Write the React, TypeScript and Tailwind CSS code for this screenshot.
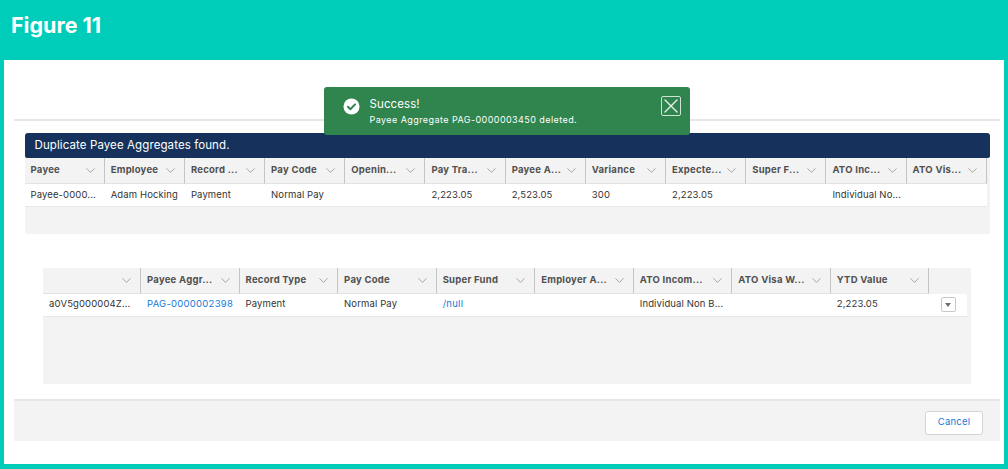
import { ChevronDown } from "lucide-react";

const topColumns = ["Payee", "Employee", "Record ...", "Pay Code", "Openin...", "Pay Tra...", "Payee A...", "Variance", "Expecte...", "Super F...", "ATO Inc...", "ATO Vis..."];
const topRow = ["Payee-0000...", "Adam Hocking", "Payment", "Normal Pay", "", "2,223.05", "2,523.05", "300", "2,223.05", "", "Individual No...", ""];

const bottomColumns = ["", "Payee Aggr...", "Record Type", "Pay Code", "Super Fund", "Employer A...", "ATO Incom...", "ATO Visa W...", "YTD Value"];
const bottomRow = ["a0V5g000004Z...", "PAG-0000002398", "Payment", "Normal Pay", "/null", "", "Individual Non B...", "", "2,223.05"];

function HeaderCell({ label }: { label: string }) {
  return (
    <div className="flex h-[26px] items-center justify-between border-b border-r border-b-[#e3e3e3] border-r-[#c4c4c4] pl-[6px] pr-[6px]">
      <span className="whitespace-nowrap text-[9.5px] font-bold tracking-[0.25px] text-[#505050]">{label}</span>
      <ChevronDown className="h-[15px] w-[15px] shrink-0 text-[#777777]" strokeWidth={1} />
    </div>
  );
}

function BodyCell({ value, link }: { value: string; link?: boolean }) {
  return (
    <div className={`flex h-[22px] items-center whitespace-nowrap pl-[6px] text-[9.5px] ${link ? "tracking-[0.26px] text-[#1679d8]" : "tracking-[0.12px] text-[#333333]"}`}>
      {value}
    </div>
  );
}

export default function App() {
  return (
    <div className="flex h-[469px] w-[1008px] flex-col overflow-hidden bg-[#00cdb9] font-['Inter',sans-serif]">
      <div className="flex h-[60px] shrink-0 items-start pl-[11px] pt-[12px]">
        <h1 className="text-[21.5px] font-bold leading-[27px] text-white">Figure 11</h1>
      </div>

      <div className="relative mx-[4px] flex h-[404px] flex-col bg-white">
        {/* toast sits over the rule and the banner */}
        <div className="absolute left-[319.5px] top-[27px] z-10 flex h-[48px] w-[366.5px] items-start rounded-[3px] bg-[#30844e] pl-[19px] pt-[10px] text-white">
          <svg viewBox="0 0 18 18" className="mt-[1px] h-[17px] w-[17px] shrink-0">
            <circle cx="9" cy="9" r="8.5" fill="#fff" />
            <path d="M5.2 9.3l2.6 2.6 5-5.2" fill="none" stroke="#30844e" strokeWidth="2" strokeLinecap="round" strokeLinejoin="round" />
          </svg>
          <div className="ml-[10px] flex flex-col">
            <span className="text-[11.5px] leading-[14px] tracking-[0.1px]">Success!</span>
            <span className="mt-[2px] whitespace-nowrap text-[9px] leading-[14px] tracking-[0.43px]">Payee Aggregate PAG-0000003450 deleted.</span>
          </div>
          <div className="ml-auto mr-[9px] mt-[-1px] flex h-[20px] w-[20px] items-center justify-center rounded-[2px] border border-[#cfe3d6]">
            <svg viewBox="0 0 14 14" className="h-[14px] w-[14px]">
              <path d="M1 1l12 12M13 1L1 13" stroke="#e6f1ea" strokeWidth="1.4" strokeLinecap="round" />
            </svg>
          </div>
        </div>

        <div className="ml-[10px] mr-[4px] mt-[59px] h-[2px] bg-[#e7e7e7]" />

        <div className="ml-[20.5px] mr-[14.5px] mt-[12px]">
          <div className="flex h-[25px] items-center rounded-[3px] rounded-b-[2px] bg-[#16325c] pl-[10px] text-[11.5px] tracking-[0.1px] text-white">
            Duplicate Payee Aggregates found.
          </div>
          <div className="bg-[#f3f3f3] pb-[27px]">
            <div className="grid grid-cols-[repeat(12,80.2px)]">
              {topColumns.map((c) => (
                <HeaderCell key={c} label={c} />
              ))}
              {topRow.map((v, i) => (
                <div key={i} className="border-b border-[#e8e8e8] bg-white">
                  <BodyCell value={v} />
                </div>
              ))}
            </div>
          </div>
        </div>

        <div className="ml-[39px] mr-[33px] mt-[33.5px] h-[116px] bg-[#f3f3f3]">
          <div className="grid grid-cols-[98px_repeat(8,98.56px)_38px]">
            {bottomColumns.map((c, i) => (
              <HeaderCell key={i} label={c} />
            ))}
            <div className="h-[26px]" />
            {bottomRow.map((v, i) => (
              <div key={i} className="border-b border-[#e8e8e8] bg-white">
                <BodyCell value={v} link={i === 1 || i === 4} />
              </div>
            ))}
            <div className="flex h-[23px] items-center justify-center border-b border-[#e8e8e8] bg-white">
              <div className="flex h-[15px] w-[15px] items-center justify-center rounded-[2px] border border-[#c9c9c9] bg-white">
                <div className="h-0 w-0 border-x-[3.5px] border-t-[4px] border-x-transparent border-t-[#706e6b]" />
              </div>
            </div>
          </div>
        </div>

        <div className="ml-[10px] mr-[4px] mt-[15.5px] flex h-[42px] items-center justify-end border-t-2 border-[#e7e7e7] bg-[#f3f3f3] pr-[17px] pt-[3px]">
          <button className="h-[24px] w-[58px] rounded-[3px] border border-[#d4d4d4] bg-white text-[9.5px] tracking-[0.2px] text-[#1679d8]">Cancel</button>
        </div>
      </div>
    </div>
  );
}
